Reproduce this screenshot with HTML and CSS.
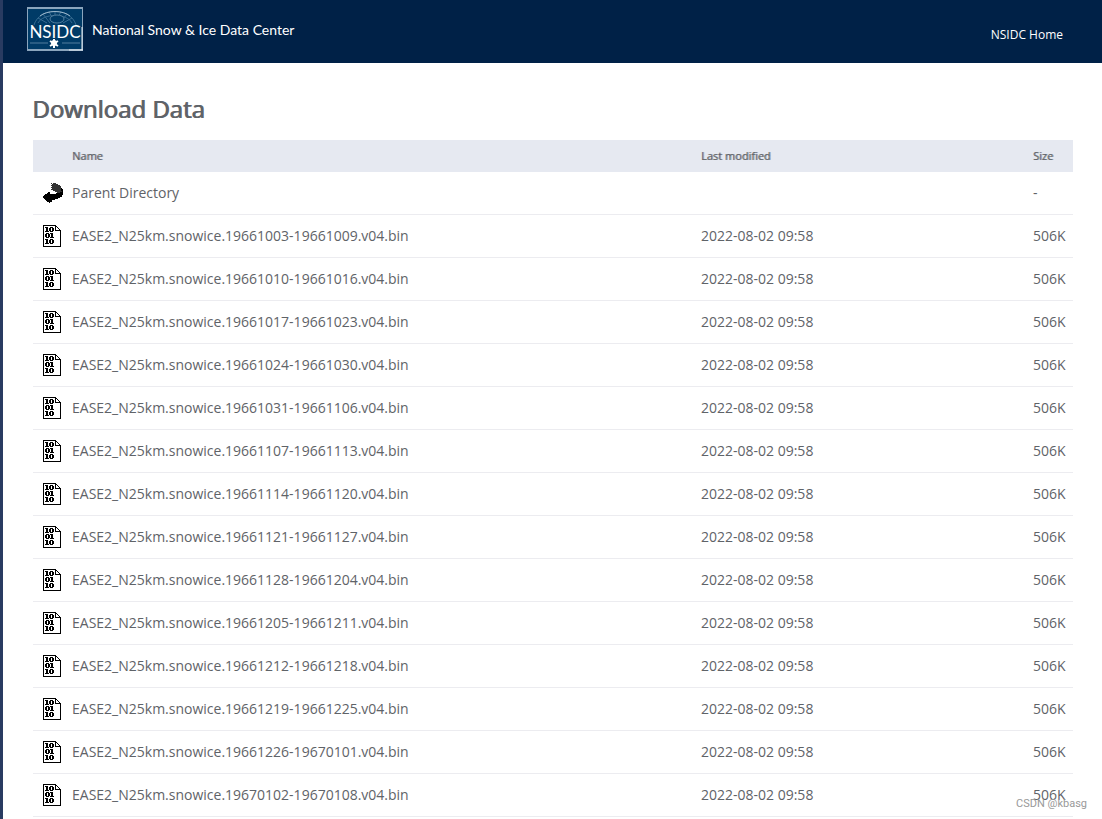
FILE: index.html
```html
<!DOCTYPE html>
<html lang="en">
<head>
<meta charset="utf-8">
<title>Download Data | National Snow &amp; Ice Data Center</title>
<link rel="stylesheet" href="styles.css">
</head>
<body>
<svg class="sprites" aria-hidden="true">
  <symbol id="binary" viewBox="0 0 20 22">
    <path fill="#fff" d="M0 0h13l5 5v17H0z"/>
    <path fill="#000" d="M0 0h13v1H1v20h16v1H0zM12 1h1v5h-1zM13 1h1v1h-1zM14 2h1v1h-1zM15 3h1v1h-1zM16 4h1v1h-1zM13 5h5v17h-2v-1h1V6h-4z"/>
    <path fill="#000" fill-rule="evenodd" d="M2 2h3v4h1v1H2V6h1V3H2zM7 2h3v1h1v3h-1v1H7V6H6V3h1zM8 3v3h1V3zM3 8h3v1h1v3H6v1H3v-1H2V9h1zM4 9v3h1V9zM8 8h2v4h1v1H7v-1h1V9H7V8zM2 14h3v4h1v1H2v-1h1v-3H2zM7 14h3v1h1v3h-1v1H7v-1H6v-3h1zM8 15v3h1v-3z"/>
  </symbol>
  <symbol id="back" viewBox="0 0 20 22">
    <path fill="#333" d="M8 1h1v1h1V1h3v1h2v1h2v1h1v2h1v4h-2v1h-3v-1h-2V9h-2V8H8V7h1V6H8V5h1V4H8V3h1V2H8z"/>
    <path fill="#000" d="M18 6h1v1h1v6h-1v2h-2v1h-2v1h-3v1H9v2H7v1H6v-1H4v-1H3v-1H2v-1H1v-1H0v-2h1v-1h1v-1h2v-1h1v-1h2v2h6v-1h4v-1h2v-1h-1z"/>
  </symbol>
</svg>
<header class="topbar">
  <a class="brand" href="#">
    <svg class="logo" viewBox="0 0 56 44" role="img" aria-label="NSIDC logo">
      <rect x="0" y="0" width="56" height="44" fill="#8ba5bd"/>
      <rect x="1" y="2" width="54" height="40" fill="#003b67"/>
      <g fill="none" stroke="#376b91">
        <path d="M7 18C12 0 44 0 49 18M11 16C16 6 40 6 45 16"/>
        <path d="M28 4v4M22 5l3 5M34 5l-3 5M16 7l7 9M40 7l-7 9M11 11l9 5M45 11l-9 5"/>
      </g>
      <path fill="none" stroke="#9db8cc" d="M13 9C20 3 36 3 43 9"/>
      <ellipse cx="30" cy="12" rx="7" ry="4" fill="#003b67" stroke="#527f9f"/>
      <text class="logo-text" x="28" y="31" text-anchor="middle">NSIDC</text>
      <path stroke="#527f9f" d="M3 36h18M35 36h18"/>
      <path stroke="#fff" stroke-width="2" d="M27 32v9M23 34l8 5M31 34l-8 5"/>
      <circle cx="27" cy="36" r="3" fill="#fff"/>
      <path stroke="#e8eef3" d="M42 43h14M55 20v23"/>
    </svg>
    <span class="brand-name">National Snow &amp; Ice Data Center</span>
  </a>
  <nav><a class="home" href="#">NSIDC Home</a></nav>
</header>
<main class="content">
  <h1 class="title">Download Data</h1>
  <table class="listing">
    <thead>
      <tr><th class="icon-col"></th><th class="name-col" scope="col">Name</th><th class="date-col" scope="col">Last modified</th><th class="size-col" scope="col">Size</th></tr>
    </thead>
    <tbody>
      <tr><td><svg class="icon"><use href="#back"/></svg></td><td><a href="#">Parent Directory</a></td><td></td><td>-</td></tr>
      <tr><td><svg class="icon"><use href="#binary"/></svg></td><td><a href="#">EASE2_N25km.snowice.19661003-19661009.v04.bin</a></td><td>2022-08-02 09:58</td><td>506K</td></tr>
      <tr><td><svg class="icon"><use href="#binary"/></svg></td><td><a href="#">EASE2_N25km.snowice.19661010-19661016.v04.bin</a></td><td>2022-08-02 09:58</td><td>506K</td></tr>
      <tr><td><svg class="icon"><use href="#binary"/></svg></td><td><a href="#">EASE2_N25km.snowice.19661017-19661023.v04.bin</a></td><td>2022-08-02 09:58</td><td>506K</td></tr>
      <tr><td><svg class="icon"><use href="#binary"/></svg></td><td><a href="#">EASE2_N25km.snowice.19661024-19661030.v04.bin</a></td><td>2022-08-02 09:58</td><td>506K</td></tr>
      <tr><td><svg class="icon"><use href="#binary"/></svg></td><td><a href="#">EASE2_N25km.snowice.19661031-19661106.v04.bin</a></td><td>2022-08-02 09:58</td><td>506K</td></tr>
      <tr><td><svg class="icon"><use href="#binary"/></svg></td><td><a href="#">EASE2_N25km.snowice.19661107-19661113.v04.bin</a></td><td>2022-08-02 09:58</td><td>506K</td></tr>
      <tr><td><svg class="icon"><use href="#binary"/></svg></td><td><a href="#">EASE2_N25km.snowice.19661114-19661120.v04.bin</a></td><td>2022-08-02 09:58</td><td>506K</td></tr>
      <tr><td><svg class="icon"><use href="#binary"/></svg></td><td><a href="#">EASE2_N25km.snowice.19661121-19661127.v04.bin</a></td><td>2022-08-02 09:58</td><td>506K</td></tr>
      <tr><td><svg class="icon"><use href="#binary"/></svg></td><td><a href="#">EASE2_N25km.snowice.19661128-19661204.v04.bin</a></td><td>2022-08-02 09:58</td><td>506K</td></tr>
      <tr><td><svg class="icon"><use href="#binary"/></svg></td><td><a href="#">EASE2_N25km.snowice.19661205-19661211.v04.bin</a></td><td>2022-08-02 09:58</td><td>506K</td></tr>
      <tr><td><svg class="icon"><use href="#binary"/></svg></td><td><a href="#">EASE2_N25km.snowice.19661212-19661218.v04.bin</a></td><td>2022-08-02 09:58</td><td>506K</td></tr>
      <tr><td><svg class="icon"><use href="#binary"/></svg></td><td><a href="#">EASE2_N25km.snowice.19661219-19661225.v04.bin</a></td><td>2022-08-02 09:58</td><td>506K</td></tr>
      <tr><td><svg class="icon"><use href="#binary"/></svg></td><td><a href="#">EASE2_N25km.snowice.19661226-19670101.v04.bin</a></td><td>2022-08-02 09:58</td><td>506K</td></tr>
      <tr><td><svg class="icon"><use href="#binary"/></svg></td><td><a href="#">EASE2_N25km.snowice.19670102-19670108.v04.bin</a></td><td>2022-08-02 09:58</td><td>506K</td></tr>
    </tbody>
  </table>
</main>
<div class="watermark">CSDN @kbasg</div>
</body>
</html>
```
FILE: styles.css
```css
* { box-sizing: border-box; }

body {
  position: relative;
  min-height: 100vh;
  margin: 0;
  border-left: 3px solid #293b61;
  background: #fff;
  color: #5f6368;
  font: 14px/20px "Open Sans", "Noto Sans", sans-serif;
}

a { color: inherit; text-decoration: none; }

.sprites { position: absolute; width: 0; height: 0; }

.topbar {
  display: flex;
  align-items: flex-start;
  justify-content: space-between;
  padding: 7px 39px 12px 24px;
  background: #002147;
  color: #fff;
}

.brand { display: flex; align-items: center; gap: 9px; }
.logo { display: block; width: 56px; height: 44px; }
.logo-text { fill: #fff; font: 17px Lato, sans-serif; }
.brand-name { padding-top: 2px; font: 14px/20px Lato, sans-serif; }
.home { display: block; padding-top: 18px; font-size: 12px; font-weight: 500; }

.content { padding: 30px 29px 0 30px; }

.title {
  margin: 0 0 15px;
  font-size: 24px;
  line-height: 32px;
  font-weight: 400;
  text-shadow: -1px 0 0 currentColor;
}

.listing {
  width: 100%;
  border-collapse: separate;
  border-spacing: 0;
  table-layout: fixed;
}

.listing th {
  height: 32px;
  padding: 0;
  background: #e6e9f1;
  font-size: 11px;
  font-weight: 400;
  text-align: left;
  text-shadow: 1px 0 0 rgb(95 99 104 / 60%);
}

.listing td {
  height: 43px;
  padding: 0;
  border-bottom: 1px solid #ececf0;
}

.listing .icon-col { width: 39px; }
.listing .date-col { width: 332px; }
.listing .size-col { width: 40px; }

.icon { display: block; width: 20px; height: 22px; margin-left: 10px; }

.watermark {
  position: absolute;
  right: 15px;
  top: 796px;
  color: #999;
  font: 11px/16px Roboto, sans-serif;
}
```
